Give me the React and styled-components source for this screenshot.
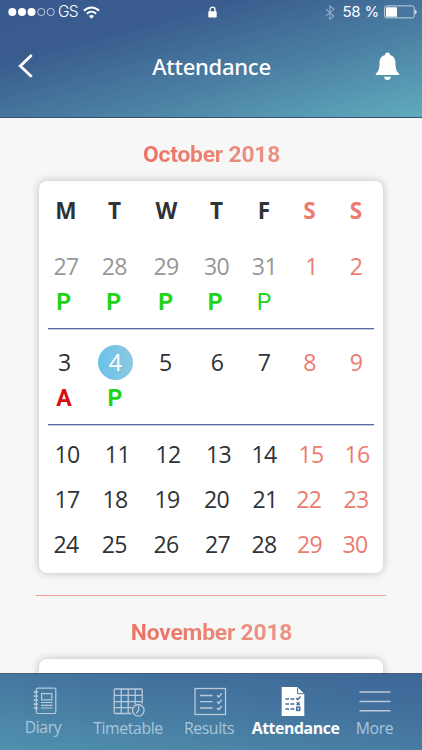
import React from "react";
import styled, { createGlobalStyle, css } from "styled-components";

const GlobalStyle = createGlobalStyle`
  * { box-sizing: border-box; }
  body { margin: 0; background: #f7f7f7; }
`;

const colors = {
  ink: "#2f3337",
  muted: "#979797",
  weekend: "#ec7c6f",
  present: "#1fd416",
  absent: "#d40f12",
  rule: "#566b9f",
};

const Screen = styled.div`
  width: 422px;
  height: 750px;
  display: flex;
  flex-direction: column;
  overflow: hidden;
  background: #f7f7f7;
  font-family: "Open Sans", "Noto Sans", sans-serif;
`;

const Header = styled.header`
  flex: none;
  height: 118px;
  border-bottom: 1px solid #35516f;
  color: #fff;
  background: linear-gradient(165deg, #395a8e 0%, #395b8e 26%, #4c82a4 64%, #60abbd 100%);
`;

const StatusBar = styled.div`
  height: 24px;
  padding: 0 5px 0 8px;
  display: grid;
  grid-template-columns: 1fr auto 1fr;
  align-items: center;
`;

const StatusGroup = styled.div`
  display: flex;
  align-items: center;
  justify-content: ${(p) => (p.$end ? "flex-end" : "flex-start")};
  svg { display: block; flex: none; }
`;

const Carrier = styled.span`
  font: 300 15.5px/24px Inter, sans-serif;
  letter-spacing: -0.8px;
  margin: 0 5px 0 3px;
`;

const Charge = styled.span`
  font: 400 15px/24px Inter, sans-serif;
  letter-spacing: -0.2px;
  margin: 0 5px 0 7px;
  white-space: nowrap;
`;

const TitleBar = styled.div`
  height: 84px;
  padding: 0 22px 0 18px;
  display: grid;
  grid-template-columns: 65px 1fr 60px;
  align-items: center;
  svg { display: block; }
`;

const Title = styled.h1`
  margin: 0;
  text-align: center;
  font: 500 22px/30px "Noto Sans", sans-serif;
  letter-spacing: -0.25px;
`;

const IconButton = styled.button`
  border: 0;
  padding: 0;
  background: none;
  color: inherit;
  display: flex;
  justify-content: ${(p) => (p.$end ? "flex-end" : "flex-start")};
`;

const Content = styled.main`
  flex: 1;
  min-height: 0;
  overflow: hidden;
  display: flex;
  flex-direction: column;
  padding: 22px 38px 0 39px;
`;

const MonthTitle = styled.h2`
  flex: none;
  margin: 0 0 12px;
  text-align: center;
  font: 700 22.8px/29px Roboto, sans-serif;
  letter-spacing: -0.18px;
  color: ${colors.weekend};
  background: linear-gradient(90deg, #ec7565 35%, #ea9181 65%);
  background-clip: text;
  -webkit-text-fill-color: transparent;
`;

const Card = styled.section`
  flex: none;
  height: 392px;
  margin-right: 1px;
  padding: 0 9px;
  border-radius: 8px;
  background: #fff;
  box-shadow: 0 0 9px rgba(0, 0, 0, 0.24);
`;

const Separator = styled.div`
  flex: none;
  width: 350px;
  height: 1px;
  margin: 22px 0 22px -3px;
  background: #f3a08f;
`;

const Row = styled.div`
  display: grid;
  grid-template-columns: 42px 56px 47px 54px 40px 51px 42px;
  margin-left: -3px;
  justify-items: center;
  align-items: center;
  height: ${(p) => p.$h}px;
`;

const Week = styled.div`
  height: ${(p) => p.$h}px;
  padding-top: ${(p) => p.$top}px;
  ${(p) =>
    p.$ruled &&
    css`
      border-bottom: 1px solid ${colors.rule};
      box-shadow: 0 1px 0 #c3cbdf;
    `}
`;

const Cell = styled.span`
  font-size: 23.1px;
  line-height: 34px;
  letter-spacing: -0.6px;
  white-space: nowrap;
  color: ${(p) => colors[p.$tone]};
  transform: translateX(${(p) => p.$dx || 0}px);
`;

const DayName = styled(Cell)`
  font-weight: 700;
  font-size: 22.6px;
  letter-spacing: 0;
`;

const Mark = styled(Cell)`
  font-family: Roboto, sans-serif;
  letter-spacing: 0;
  font-weight: ${(p) => (p.$light ? 400 : 700)};
`;

const Today = styled(Cell)`
  width: 35px;
  height: 35px;
  border-radius: 50%;
  text-align: center;
  color: #fff;
  background: linear-gradient(90deg, #6bc2ea, #8bc8df);
`;

const TabBar = styled.nav`
  flex: none;
  height: 77px;
  display: flex;
  border-top: 1px solid #4b5b70;
  background: linear-gradient(188deg, #3f6697 0%, #42709c 30%, #5090ae 100%);
`;

const Tab = styled.a`
  width: ${(p) => p.$w}px;
  display: flex;
  flex-direction: column;
  align-items: center;
  padding-top: 13px;
  font-size: 15.8px;
  line-height: 22px;
  letter-spacing: -0.4px;
  white-space: nowrap;
  color: #a9c6dc;
  svg {
    display: block;
    flex: none;
    margin-bottom: ${(p) => p.$gap}px;
    color: #b9c9d9;
    transform: translateX(${(p) => p.$dx}px);
  }
  ${(p) =>
    p.$active &&
    css`
      color: #fff;
      font-weight: 700;
      svg { color: #fff; }
    `}
`;

const SignalIcon = () => (
  <svg width="47" height="10" viewBox="0 0 47 10" fill="#fff">
    <circle cx="4.3" cy="5" r="4" />
    <circle cx="14" cy="5" r="4" />
    <circle cx="23.5" cy="5" r="4" />
    <circle cx="33.2" cy="5" r="3.6" fill="none" stroke="#dce5ef" strokeWidth=".8" />
    <circle cx="42.7" cy="5" r="3.6" fill="none" stroke="#dce5ef" strokeWidth=".8" />
  </svg>
);

const WifiIcon = () => (
  <svg width="17" height="13" viewBox="0 0 17 13" fill="none" stroke="#fff" strokeWidth="2">
    <path d="M1 4.7C5.2.3 11.8.3 16 4.7" />
    <path d="M3.9 7.8c2.7-2.7 6.5-2.7 9.2 0" />
    <path d="M6 10q2.5-2.1 5 0L8.5 12.8z" fill="#fff" stroke="none" />
  </svg>
);

const LockIcon = () => (
  <svg width="9" height="12" viewBox="0 0 9 12">
    <path d="M2 6V3.7a2.5 2.5 0 0 1 5 0V6" fill="none" stroke="#fff" strokeWidth="1.3" />
    <rect x=".3" y="5.2" width="8.4" height="6.3" rx=".8" fill="#fff" />
  </svg>
);

const BluetoothIcon = () => (
  <svg width="10" height="15" viewBox="0 0 10 15" fill="none" stroke="#91adc6" strokeWidth="1.1">
    <path d="M.8 4l8 7-4 3.4V.8l4 3.3-8 7" />
  </svg>
);

const BatteryIcon = () => (
  <svg width="33" height="14" viewBox="0 0 33 14">
    <rect x=".6" y=".9" width="29.6" height="12" rx="1.8" fill="none" stroke="#c4d5e2" strokeWidth="1" />
    <rect x="2" y="2.2" width="11" height="9.5" rx=".5" fill="#fff" />
    <path d="M31 4.8q1.7.5 1.7 2.1T31 9z" fill="#e1eaf1" />
  </svg>
);

const BackIcon = () => (
  <svg width="16" height="24" viewBox="0 0 16 24" fill="none" stroke="#fff" strokeWidth="2.8">
    <path d="M13.7 1L2.3 12l11.4 10.8" />
  </svg>
);

const BellIcon = () => (
  <svg width="25" height="29" viewBox="0 0 25 29" fill="#fff">
    <path d="M12.5.5c1.6 0 2.4 1 2.5 2.5 4 1.2 5.5 4.3 5.5 8.2 0 5.4.8 8.1 3.5 10.3.7.6.4 1.5-.5 1.5h-22C.6 23 .3 22.1 1 21.5c2.7-2.2 3.5-4.9 3.5-10.3 0-3.9 1.5-7 5.5-8.2.1-1.5.9-2.5 2.5-2.5z" />
    <path d="M9 24.7h7c-.3 2-1.6 3.3-3.5 3.3S9.3 26.7 9 24.7z" />
  </svg>
);

const DiaryIcon = () => (
  <svg width="24" height="30" viewBox="0 0 24 30" fill="none" stroke="currentColor" strokeWidth="1.2">
    <rect x="3.3" y="1.2" width="19.5" height="25.3" rx="1.2" />
    <path d="M.8 5.2h4M.8 9.2h4M.8 13.2h4M.8 17.2h4M.8 21.2h4" strokeWidth="1.7" />
    <rect x="8.6" y="6.6" width="10.2" height="6.3" />
    <path d="M8 15.5h11.5M8 18.3h11.5M8 21h11.5" />
  </svg>
);

const TimetableIcon = () => (
  <svg width="32" height="30" viewBox="0 0 32 30" fill="none" stroke="currentColor" strokeWidth="1.3">
    <path d="M18.5 26.5H2.2q-1 0-1-1V3q0-1 1-1h26q1 0 1 1v13.5M1.2 8.3h28M1.2 14.6h28M1.2 20.7h18M8.2 2v24.5M15.2 2v24.5M22.2 2v15.5" />
    <circle cx="25.3" cy="23.3" r="5.8" />
    <path d="M25.6 18.8v4.7l-2.4 2.9" />
  </svg>
);

const ResultsIcon = () => (
  <svg width="34" height="30" viewBox="0 0 34 30" fill="none" stroke="currentColor" strokeWidth="1.3">
    <rect x="2" y="1.5" width="30.5" height="26" />
    <path d="M7 8.5h12.5M7 14.7h12.5M7 21h12.5" />
    <path d="M24 8.3l1.7 1.8 3-3.7M24 14.6l1.7 1.8 3-3.7M24 20.9l1.7 1.8 3-3.7" strokeWidth="1.5" />
  </svg>
);

const AttendanceIcon = () => (
  <svg width="24" height="30" viewBox="0 0 24 30">
    <path d="M.7 0h15.6l7 7v22H.7z" fill="#fff" />
    <path d="M16.7.5v6.2h6.1" fill="#fff" stroke="#426b98" strokeWidth="1" />
    <g fill="none" stroke="#426b98" strokeWidth="1.5">
      <path d="M4.4 12h3.6M9.5 12h3.8M4.4 17h3.6M9.5 17h3.8M4.4 21.9h3.6M9.5 21.9h3.8" />
      <path d="M15.3 11.1l1.6 1.5 2.5-3.2M15.7 15.3l3 3M18.7 15.3l-3 3" />
      <rect x="15.8" y="20.2" width="2.9" height="3.2" />
    </g>
  </svg>
);

const MoreIcon = () => (
  <svg width="32" height="30" viewBox="0 0 32 30" stroke="currentColor" strokeWidth="1.5">
    <path d="M.5 5h31M.5 14.4h31M.5 23.8h31" />
  </svg>
);

const NAMES = ["M", "T", "W", "T", "F", "S", "S"];
const tone = (i, muted) => (i > 4 ? "weekend" : muted ? "muted" : "ink");

function Days({ days, h, muted, today, shifts = [] }) {
  return (
    <Row $h={h}>
      {days.map((d, i) =>
        d === today ? (
          <Today key={d} $dx={shifts[i]}>{d}</Today>
        ) : (
          <Cell key={d} $tone={tone(i, muted)} $dx={shifts[i]}>{d}</Cell>
        )
      )}
    </Row>
  );
}

function Marks({ marks, lightFrom = 9, shifts = [] }) {
  return (
    <Row $h={37}>
      {marks.map((m, i) => (
        <Mark key={i} $tone={m === "A" ? "absent" : "present"} $light={i >= lightFrom} $dx={shifts[i]}>{m}</Mark>
      ))}
    </Row>
  );
}

const TABS = [
  { label: "Diary", Icon: DiaryIcon, w: 86, dx: 2, gap: -1 },
  { label: "Timetable", Icon: TimetableIcon, w: 84, dx: 1, gap: 0 },
  { label: "Results", Icon: ResultsIcon, w: 78, dx: 1, gap: 0 },
  { label: "Attendance", Icon: AttendanceIcon, w: 95, dx: -3, gap: 0 },
  { label: "More", Icon: MoreIcon, w: 63, dx: 0, gap: 0 },
];

export default function App() {
  return (
    <Screen>
      <GlobalStyle />
      <Header>
        <StatusBar>
          <StatusGroup>
            <SignalIcon />
            <Carrier>GS</Carrier>
            <WifiIcon />
          </StatusGroup>
          <LockIcon />
          <StatusGroup $end>
            <BluetoothIcon />
            <Charge>58 %</Charge>
            <BatteryIcon />
          </StatusGroup>
        </StatusBar>
        <TitleBar>
          <IconButton aria-label="Back"><BackIcon /></IconButton>
          <Title>Attendance</Title>
          <IconButton $end aria-label="Notifications"><BellIcon /></IconButton>
        </TitleBar>
      </Header>
      <Content>
        <MonthTitle>October 2018</MonthTitle>
        <Card>
          <Row $h={59}>
            {NAMES.map((n, i) => (
              <DayName key={i} $tone={tone(i)} $dx={i === 1 || i === 3 ? -0.5 : 0}>{n}</DayName>
            ))}
          </Row>
          <Week $h={89} $top={8} $ruled>
            <Days days={[27, 28, 29, 30, 31, 1, 2]} h={36} muted shifts={[0, -0.7, -0.5, -0.5, 0.4, 2, 0]} />
            <Marks marks={["P", "P", "P", "P", "P"]} lightFrom={4} shifts={[-2.4, -1.2, -0.7, -1.8, 0]} />
          </Week>
          <Week $h={96} $top={15} $ruled>
            <Days days={[3, 4, 5, 6, 7, 8, 9]} h={36} today={4} shifts={[-1.7, 0, -1.2, 0, 0, 0, 0]} />
            <Marks marks={["A", "P"]} shifts={[-1.9, 0]} />
          </Week>
          <Week $h={148} $top={6}>
            <Days days={[10, 11, 12, 13, 14, 15, 16]} h={45} shifts={[1, 2.4, 1.6, 1.6, 0, 1.5, 1]} />
            <Days days={[17, 18, 19, 20, 21, 22, 23]} h={45} shifts={[1, 0, 0.5, -0.5, 1, -0.7, 0]} />
            <Days days={[24, 25, 26, 27, 28, 29, 30]} h={45} shifts={[0, -0.7, -0.5, 0.5, 0, 0, -1]} />
          </Week>
        </Card>
        <Separator />
        <MonthTitle>November 2018</MonthTitle>
        <Card />
      </Content>
      <TabBar>
        {TABS.map(({ label, Icon, w, dx, gap }) => (
          <Tab key={label} $w={w} $dx={dx} $gap={gap} $active={label === "Attendance"}>
            <Icon />
            {label}
          </Tab>
        ))}
      </TabBar>
    </Screen>
  );
}
